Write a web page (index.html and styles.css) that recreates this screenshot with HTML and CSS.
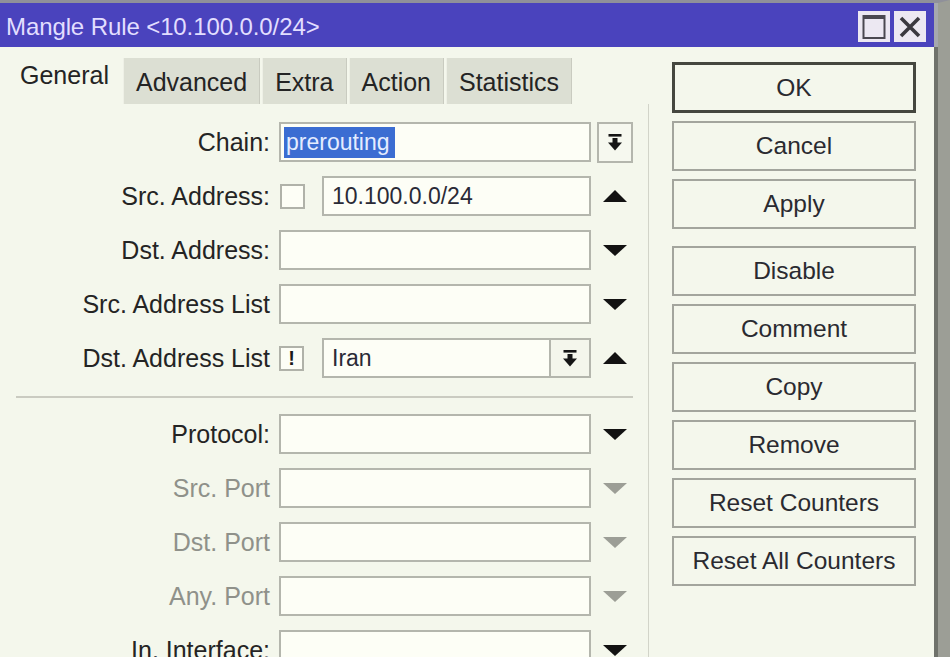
FILE: index.html
```html
<!DOCTYPE html>
<html>
<head>
<meta charset="utf-8">
<title>Mangle Rule</title>
<link rel="stylesheet" href="styles.css">
</head>
<body>
<div class="window">
  <div class="titlebar">
    <span class="title">Mangle Rule &lt;10.100.0.0/24&gt;</span>
    <div class="tb-buttons">
      <span class="tb-btn">
        <svg width="24" height="26" viewBox="0 0 24 26"><rect x="1.5" y="2" width="21" height="22" fill="none" stroke="#4a4850" stroke-width="2"/><rect x="1" y="1" width="22" height="4" fill="#4a4850"/></svg>
      </span>
      <span class="tb-btn">
        <svg width="26" height="26" viewBox="0 0 26 26"><path d="M4 4 L22 22 M22 4 L4 22" stroke="#3b3940" stroke-width="3.6" fill="none"/></svg>
      </span>
    </div>
  </div>
  <div class="body">
    <div class="main">
      <div class="tabs">
        <div class="tab active">General</div>
        <div class="tab">Advanced</div>
        <div class="tab">Extra</div>
        <div class="tab">Action</div>
        <div class="tab">Statistics</div>
      </div>
      <div class="panel">
        <div class="row">
          <span class="lbl">Chain:</span>
          <div class="field"><div class="input chain"><span class="sel">prerouting</span></div></div>
          <div class="trail">
            <span class="dd-btn"><svg class="dd-icon" width="14" height="17" viewBox="0 0 14 17"><rect x="0.5" y="0" width="13" height="2.6"/><rect x="4.5" y="4" width="5" height="5"/><polygon points="0,8.5 14,8.5 7,16.5"/></svg></span>
          </div>
        </div>
        <div class="row">
          <span class="lbl">Src. Address:</span>
          <div class="field"><span class="check"></span><div class="input">10.100.0.0/24</div></div>
          <div class="trail"><span class="tri-up"></span></div>
        </div>
        <div class="row">
          <span class="lbl">Dst. Address:</span>
          <div class="field"><div class="input"></div></div>
          <div class="trail"><span class="tri-down"></span></div>
        </div>
        <div class="row">
          <span class="lbl">Src. Address List</span>
          <div class="field"><div class="input"></div></div>
          <div class="trail"><span class="tri-down"></span></div>
        </div>
        <div class="row">
          <span class="lbl">Dst. Address List</span>
          <div class="field"><span class="check not">!</span><div class="input joined">Iran</div><span class="dd-btn inline"><svg class="dd-icon" width="14" height="17" viewBox="0 0 14 17"><rect x="0.5" y="0" width="13" height="2.6"/><rect x="4.5" y="4" width="5" height="5"/><polygon points="0,8.5 14,8.5 7,16.5"/></svg></span></div>
          <div class="trail"><span class="tri-up"></span></div>
        </div>
        <div class="sep"></div>
        <div class="row">
          <span class="lbl">Protocol:</span>
          <div class="field"><div class="input"></div></div>
          <div class="trail"><span class="tri-down"></span></div>
        </div>
        <div class="row disabled">
          <span class="lbl">Src. Port</span>
          <div class="field"><div class="input"></div></div>
          <div class="trail"><span class="tri-down"></span></div>
        </div>
        <div class="row disabled">
          <span class="lbl">Dst. Port</span>
          <div class="field"><div class="input"></div></div>
          <div class="trail"><span class="tri-down"></span></div>
        </div>
        <div class="row disabled">
          <span class="lbl">Any. Port</span>
          <div class="field"><div class="input"></div></div>
          <div class="trail"><span class="tri-down"></span></div>
        </div>
        <div class="row">
          <span class="lbl">In. Interface:</span>
          <div class="field"><div class="input"></div></div>
          <div class="trail"><span class="tri-down"></span></div>
        </div>
      </div>
    </div>
    <div class="side">
      <div class="btn ok">OK</div>
      <div class="btn">Cancel</div>
      <div class="btn">Apply</div>
      <div class="btn spaced">Disable</div>
      <div class="btn">Comment</div>
      <div class="btn">Copy</div>
      <div class="btn">Remove</div>
      <div class="btn">Reset Counters</div>
      <div class="btn">Reset All Counters</div>
    </div>
  </div>
</div>
</body>
</html>
```

FILE: styles.css
```css
* { box-sizing: border-box; }
html, body { margin: 0; padding: 0; }
body {
  width: 950px;
  height: 657px;
  overflow: hidden;
  font-family: "Liberation Sans", Arial, sans-serif;
  background: #f4f7ec;
  color: #242424;
}
.window {
  width: 950px;
  height: 657px;
  display: flex;
  flex-direction: column;
  border-top: 3px solid #8f909a;
  border-right: 12px solid #9c9e96;
  overflow: hidden;
}
.titlebar {
  height: 44px;
  flex: none;
  background: #4a43bd;
  display: flex;
  align-items: center;
  justify-content: space-between;
  padding: 3px 8px 0 6px;
  border-right: 4px solid #a6a8ae;
}
.title {
  color: #e2deff;
  font-size: 24px;
  letter-spacing: -0.1px;
}
.tb-buttons { display: flex; gap: 4px; }
.tb-btn {
  width: 32px;
  height: 31px;
  background: #ece8f2;
  display: flex;
  align-items: center;
  justify-content: center;
}
.body {
  flex: 1;
  min-height: 0;
  display: flex;
  background: #f4f7ec;
  border-right: 4px solid #6f726b;
}
.main {
  width: 649px;
  flex: none;
  display: flex;
  flex-direction: column;
}
.tabs {
  height: 57px;
  flex: none;
  display: flex;
  align-items: flex-end;
  gap: 2px;
  padding-left: 8px;
}
.tab {
  height: 46px;
  padding: 2px 12px 0;
  background: #dcdfd3;
  font-size: 25px;
  color: #242424;
  display: flex;
  align-items: center;
  border-left: 1px solid #eef0e6;
  border-right: 1px solid #c9cbc0;
}
.tab.active {
  height: 54px;
  padding: 0 12px 4px;
  background: #f4f7ec;
  border: none;
}
.panel {
  flex: 1;
  display: flex;
  flex-direction: column;
  gap: 14px;
  padding-top: 18px;
  border-right: 1px solid #d2d4c9;
}
.row {
  height: 40px;
  flex: none;
  display: flex;
  align-items: center;
}
.lbl {
  width: 270px;
  margin-right: 9px;
  text-align: right;
  font-size: 25px;
  color: #242424;
  white-space: nowrap;
}
.row.disabled .lbl { color: #8f918a; }
.field {
  width: 312px;
  height: 40px;
  display: flex;
  align-items: center;
}
.input {
  flex: 1;
  height: 40px;
  background: #fdfef6;
  border: 2px solid #b4b6ad;
  font-size: 23px;
  color: #2a2a36;
  padding-left: 8px;
  display: flex;
  align-items: center;
}
.input.chain { padding-left: 3px; }
.input.joined { border-right: none; }
.sel {
  background: #3b6dd2;
  color: #e4ecff;
  height: 31px;
  display: flex;
  align-items: center;
  padding: 0 5px 0 2px;
}
.check {
  width: 25px;
  height: 25px;
  margin: 0 17px 0 1px;
  background: #fdfef6;
  border: 2px solid #b0b2a9;
  flex: none;
  font-size: 20px;
  font-weight: bold;
  color: #1a1a1a;
  display: flex;
  align-items: center;
  justify-content: center;
  line-height: 1;
}
.check.not { margin-left: 0; margin-right: 18px; }
.trail {
  width: 48px;
  height: 40px;
  display: flex;
  align-items: center;
  justify-content: center;
}
.dd-btn {
  width: 36px;
  height: 41px;
  border: 2px solid #b4b6ad;
  background: #f6f8ef;
  display: flex;
  align-items: center;
  justify-content: center;
  flex: none;
}
.dd-btn.inline {
  width: 42px;
  height: 40px;
  background: #f4f6ec;
}
.dd-icon { fill: #151515; }
.tri-down {
  width: 0;
  height: 0;
  border-left: 12px solid transparent;
  border-right: 12px solid transparent;
  border-top: 11px solid #121212;
}
.tri-up {
  width: 0;
  height: 0;
  border-left: 12px solid transparent;
  border-right: 12px solid transparent;
  border-bottom: 12px solid #121212;
}
.row.disabled .tri-down { border-top-color: #9c9e96; }
.sep {
  height: 2px;
  flex: none;
  background: #cacbc1;
  margin: 4px 15px 2px 16px;
}
.side {
  display: flex;
  flex-direction: column;
  gap: 8px;
  padding: 15px 0 0 23px;
}
.btn {
  width: 244px;
  height: 50px;
  flex: none;
  border: 2px solid #a3a59d;
  background: #f4f7ec;
  font-size: 24.5px;
  color: #2a2a30;
  display: flex;
  align-items: center;
  justify-content: center;
}
.btn.ok { border: 3px solid #45473f; height: 51px; }
.btn.spaced { margin-top: 9px; }
```
